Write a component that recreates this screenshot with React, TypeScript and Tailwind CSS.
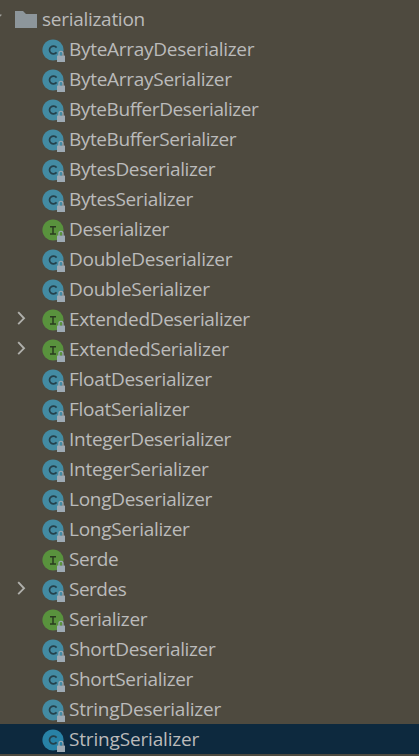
import { FunctionComponent } from "react";

type Kind = "class" | "interface";

interface TreeItem {
  name: string;
  kind: Kind;
  expandable?: boolean;
  selected?: boolean;
  tracking?: string;
}

const items: TreeItem[] = [
  { name: "ByteArrayDeserializer", kind: "class" },
  { name: "ByteArraySerializer", kind: "class" },
  { name: "ByteBufferDeserializer", kind: "class", tracking: "tracking-[-0.42px]" },
  { name: "ByteBufferSerializer", kind: "class", tracking: "tracking-[-0.42px]" },
  { name: "BytesDeserializer", kind: "class", tracking: "tracking-[-0.37px]" },
  { name: "BytesSerializer", kind: "class", tracking: "tracking-[-0.36px]" },
  { name: "Deserializer", kind: "interface", tracking: "tracking-[-0.35px]" },
  { name: "DoubleDeserializer", kind: "class" },
  { name: "DoubleSerializer", kind: "class" },
  { name: "ExtendedDeserializer", kind: "interface", expandable: true, tracking: "tracking-[-0.35px]" },
  { name: "ExtendedSerializer", kind: "interface", expandable: true },
  { name: "FloatDeserializer", kind: "class" },
  { name: "FloatSerializer", kind: "class" },
  { name: "IntegerDeserializer", kind: "class" },
  { name: "IntegerSerializer", kind: "class" },
  { name: "LongDeserializer", kind: "class" },
  { name: "LongSerializer", kind: "class" },
  { name: "Serde", kind: "interface", tracking: "tracking-[-0.4px]" },
  { name: "Serdes", kind: "class", expandable: true, tracking: "tracking-[-0.5px]" },
  { name: "Serializer", kind: "interface" },
  { name: "ShortDeserializer", kind: "class", tracking: "tracking-[-0.35px]" },
  { name: "ShortSerializer", kind: "class", tracking: "tracking-[-0.35px]" },
  { name: "StringDeserializer", kind: "class", tracking: "tracking-[-0.22px]" },
  { name: "StringSerializer", kind: "class", selected: true, tracking: "tracking-[-0.17px]" },
];

const FolderIcon = () => (
  <svg width="22" height="18" viewBox="0 0 22 18" className="shrink-0">
    <path d="M0 1h8l3 3h11v14H0z" fill="#8d969b" />
  </svg>
);

const Chevron = () => (
  <svg width="10" height="14" viewBox="0 0 10 14" className="shrink-0">
    <path d="M1.2 1.2 7 7.3 1.2 13.2" fill="none" stroke="#b0b0ac" strokeWidth="1.9" />
  </svg>
);

const KindIcon: FunctionComponent<{ kind: Kind; selected?: boolean }> = ({
  kind,
  selected,
}) => {
  const classFill = selected ? "#2882a6" : "#438ba3";

  return (
    <svg width="24" height="24" viewBox="0 0 24 24" className="mt-1 shrink-0">
      <circle cx="11" cy="11" r="10.6" fill={kind === "class" ? classFill : "#59923d"} />
      {kind === "class" ? (
        <path
          d="M14.6 8.6A4 3.8 0 1 0 14.6 13.4"
          fill="none"
          stroke="#25414b"
          strokeWidth="1.7"
        />
      ) : (
        <path
          d="M8 7.7h6M11 7.7v7.3M8 15h6"
          fill="none"
          stroke="#2a3b20"
          strokeWidth="1.5"
        />
      )}
      <path
        d="M17 17v-2.6a2 2 0 0 1 4 0V17"
        fill="none"
        stroke="#9daab4"
        strokeWidth="1.3"
      />
      <path d="M15 16.6h8V23h-8z" fill="#9daab4" />
    </svg>
  );
};

const TreeRow: FunctionComponent<{ item: TreeItem }> = ({ item }) => (
  <li className={`flex h-[30px] items-center ${item.selected ? "bg-[#0d293e]" : ""}`}>
    <span className="flex w-[42px] shrink-0 pb-0.5 pl-[17px]">
      {item.expandable && <Chevron />}
    </span>
    <KindIcon kind={item.kind} selected={item.selected} />
    <span className={`pl-[3px] leading-[30px] ${item.tracking ?? "tracking-[-0.28px]"}`}>
      {item.name}
    </span>
  </li>
);

const App: FunctionComponent = () => (
  <main className="h-[756px] w-[419px] overflow-hidden bg-[#4e4a3f] pt-1 font-['Open_Sans','Noto_Sans',sans-serif] text-[19px] whitespace-nowrap text-[#bbbbbb]">
    <div className="flex h-[30px] items-center">
      <span className="flex w-[15px] shrink-0 pb-1.5">
        <svg width="3" height="4" viewBox="0 0 3 4">
          <path d="M-1 3 1.3 0.5" stroke="#a0a09b" strokeWidth="1.2" />
        </svg>
      </span>
      <FolderIcon />
      <span className="pl-[5px] leading-[30px] tracking-[-0.28px]">serialization</span>
    </div>
    <ul>
      {items.map((item) => (
        <TreeRow key={item.name} item={item} />
      ))}
    </ul>
  </main>
);

export default App;
